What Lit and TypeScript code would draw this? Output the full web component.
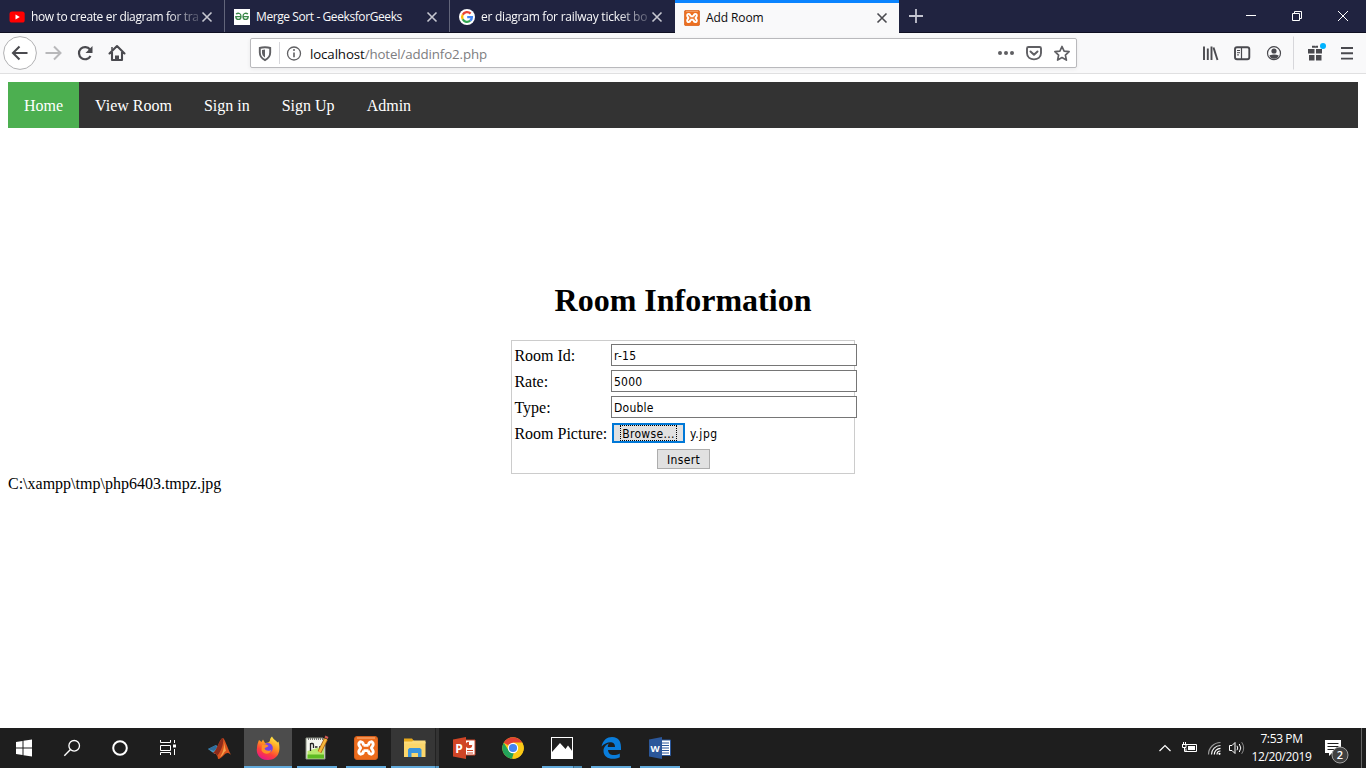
import { LitElement, html, css, svg } from "lit";
import { customElement } from "lit/decorators.js";
import { classMap } from "lit/directives/class-map.js";

// Icons are drawn in window coordinates: x, y, w, h is the cell each one fills.
const icon = (x: number, y: number, w: number, h: number, body: unknown) =>
  html`<svg width=${w} height=${h} viewBox="${x} ${y} ${w} ${h}" aria-hidden="true">${body}</svg>`;

const xamppMark = (fill: string) => svg`
  <rect x="0.5" y="0.5" width="23" height="23" rx="2.5" fill=${fill} stroke="#d35f1c"/>
  <path d="M3 2h18" stroke="#f9b98a" stroke-width="1"/>
  <path d="M9.5 9.4h5M9.5 14.600h5M9.500 9.400C9.500 4.600 4.600 5 4.800 8.400C4.900 10.200 6 10.600 6.600 12C6 13.400 4.900 13.800 4.800 15.600C4.600 19 9.500 19.400 9.500 14.600M14.500 9.400C14.500 4.600 19.400 5 19.200 8.400C19.100 10.200 18 10.600 17.400 12C18 13.400 19.100 13.800 19.200 15.600C19.400 19 14.500 19.400 14.500 14.600" fill="none" stroke="#fff" stroke-width="2.900" stroke-linejoin="round"/>`;

const favicons = {
  youtube: html`<svg width="16" height="16" viewBox="0 0 16 16"><rect x="0.5" y="2.5" width="15.2" height="11" rx="2.6" fill="#f00"/><path d="M6.5 5.4v5.2L10.8 8z" fill="#fff"/></svg>`,
  geeks: html`<svg width="16" height="16" viewBox="0 0 16 16"><rect width="16" height="16" fill="#fff"/><path d="M2 5C4.500 3.400 7 4.400 7 7.400C7 11.400 2 11.400 1.800 7.600H7M14 5C11.500 3.400 9 4.400 9 7.400C9 11.400 14 11.400 14.200 7.600H9" fill="none" stroke="#3a8748" stroke-width="1.300"/></svg>`,
  google: html`<svg width="16" height="16" viewBox="0 0 16 16"><circle cx="8" cy="8" r="8" fill="#fff"/><g fill="none" stroke-width="2.3"><path d="M11.6 4.6A4.9 4.9 0 0 0 3.7 5.7" stroke="#ea4335"/><path d="M3.7 5.7A4.9 4.9 0 0 0 3.7 10.3" stroke="#fbbc05"/><path d="M3.7 10.3A4.9 4.9 0 0 0 11.2 11.7" stroke="#34a853"/><path d="M11.2 11.7A4.9 4.9 0 0 0 12.9 8.1H8.2" stroke="#4285f4"/></g></svg>`,
  xampp: html`<svg width="16" height="16" viewBox="0 0 24 24">${xamppMark("#ec6f20")}</svg>`,
};

const tabs = [
  { title: "how to create er diagram for tra", fav: favicons.youtube, active: false, track: "a" },
  { title: "Merge Sort - GeeksforGeeks", fav: favicons.geeks, active: false, track: "b" },
  { title: "er diagram for railway ticket bo", fav: favicons.google, active: false, track: "c" },
  { title: "Add Room", fav: favicons.xampp, active: true, track: "d" },
];

@customElement("tab-strip")
export class TabStrip extends LitElement {
  static styles = css`
    :host { display: flex; height: 33px; box-sizing: border-box; background: #202340; border-bottom: 1px solid #0f1022;
      font: 12px/16px "Open Sans", "Noto Sans", sans-serif; color: #f9f9fa; }
    svg { display: block; flex: none; }
    .tab { width: 225px; height: 32px; box-sizing: border-box; padding: 2px 11px 0 9px; display: flex; align-items: center;
      border-right: 1px solid #62657a; }
    .tab.before { border-right-color: #202340; }
    .tab.active { width: 224px; height: 33px; background: #f9f9fa; color: #0c0c0d; border-top: 3px solid #0a84ff; border-right: 0; padding: 0 11px 1px 9px; }
    .title { flex: 1; margin-left: 6px; white-space: nowrap; }
    .fade { -webkit-mask-image: linear-gradient(to right, #000 calc(100% - 34px), rgba(0,0,0,.15)); mask-image: linear-gradient(to right, #000 calc(100% - 34px), rgba(0,0,0,.15)); }
    .a { letter-spacing: -0.36px; }
    .b { letter-spacing: -0.41px; }
    .c { letter-spacing: -0.25px; }
    .d { letter-spacing: -0.1px; }
    .grow { flex: 1; }
  `;
  render() {
    return html`
      ${tabs.map((t, i) => html`
        <div class=${classMap({ tab: true, active: t.active, before: i === 2 })}>
          ${t.fav}
          <span class=${classMap({ title: true, fade: i === 0 || i === 2, [t.track]: true })}>${t.title}</span>
          <svg width="12" height="12" viewBox="0 0 12 12"><path d="M1.5 1.5l9 9M10.5 1.5l-9 9" stroke=${t.active ? "#4a4a4f" : "#c6c7d0"} stroke-width="1.6"/></svg>
        </div>`)}
      ${icon(899, 0, 34, 32, svg`<path d="M909 16h14M916 9v14" stroke="#c3c4d0" stroke-width="1.8"/>`)}
      <span class="grow"></span>
      ${icon(1228, 0, 46, 32, svg`<path d="M1246 15.5h10" stroke="#fff"/>`)}
      ${icon(1274, 0, 46, 32, svg`<path d="M1292.5 13.5h7v7h-7zM1294.500 13v-1.500h7v7h-1.500" fill="none" stroke="#fff"/>`)}
      ${icon(1320, 0, 46, 32, svg`<path d="M1338 11l10 10M1348 11l-10 10" stroke="#fff"/>`)}
    `;
  }
}

@customElement("nav-toolbar")
export class NavToolbar extends LitElement {
  static styles = css`
    :host { display: flex; align-items: center; height: 41px; box-sizing: border-box; border-bottom: 1px solid #e0e0e1; background: #f9f9fa; }
    svg { display: block; flex: none; }
    .gap { width: 117px; }
    .grow { flex: 1; }
    .url { width: 827px; height: 30px; box-sizing: border-box; display: flex; align-items: center; background: #fff;
      border: 1px solid #b9b9bc; border-radius: 2px; box-shadow: 0 1px 4px rgba(0,0,0,.07); }
    .address { flex: 1; padding: 2px 0 0 1px; font: 13.3px/18px "Open Sans", "Noto Sans", sans-serif; color: #7d7d80; letter-spacing: -0.12px; white-space: nowrap; }
    .host { color: #0c0c0d; }
  `;
  render() {
    return html`
      ${icon(0, 33, 40, 40, svg`<circle cx="20" cy="53" r="16.400" fill="#fff" stroke="#b1b1b3"/><path d="M27.500 53H13M19.500 46.500L13 53l6.500 6.500" fill="none" stroke="#4a4a4f" stroke-width="2.100"/>`)}
      ${icon(40, 33, 30, 40, svg`<path d="M45.500 53H60M54 46.500l6.500 6.500L54 59.500" fill="none" stroke="#b8b8ba" stroke-width="2"/>`)}
      ${icon(70, 33, 31, 40, svg`<path d="M90 49.500A6.100 6.100 0 1 0 90.500 56" fill="none" stroke="#4a4a4f" stroke-width="2.200"/><path d="M92.500 46v7h-7z" fill="#4a4a4f"/>`)}
      ${icon(101, 33, 32, 40, svg`<path d="M109.500 53.500L117 46l7.500 7.500M112 52v8h10v-8" fill="none" stroke="#4a4a4f" stroke-width="2.100" stroke-linejoin="round" stroke-linecap="round"/><path d="M115 55.500h4V60h-4z" fill="#4a4a4f"/><path d="M112 47v3" stroke="#4a4a4f" stroke-width="1.500"/>`)}
      <span class="gap"></span>
      <div class="url">
        ${icon(251, 39, 58, 28, svg`
          <path d="M265 47.200c-2 0-4 .3-5.200.8v4.500c0 3.500 2 6 5.200 7.600c3.200-1.600 5.200-4.100 5.200-7.600V48c-1.200-.5-3.200-.8-5.200-.8z" fill="none" stroke="#606063" stroke-width="1.900"/>
          <path d="M265 49.500v8c-2-1-3-3-3-5V50z" fill="#606063"/>
          <path d="M279.500 42v22" stroke="#d7d7db"/>
          <circle cx="294" cy="53.500" r="6.500" fill="none" stroke="#606063" stroke-width="1.300"/><path d="M294 52.500v4.800" stroke="#606063" stroke-width="1.600"/><circle cx="294" cy="50" r="1" fill="#606063"/>`)}
        <div class="address"><span class="host">localhost</span>/hotel/addinfo2.php</div>
        ${icon(992, 39, 84, 28, svg`
          <g fill="#5f5f63"><circle cx="1000" cy="53" r="2"/><circle cx="1006" cy="53" r="2"/><circle cx="1012" cy="53" r="2"/></g>
          <path d="M1027 48.500q0-1.500 1.500-1.500h11q1.500 0 1.500 1.500V53c0 8.500-14 8.500-14 0z" fill="none" stroke="#5f5f63" stroke-width="1.900"/><path d="M1030.500 51.500l3.500 3.200l3.500-3.200" fill="none" stroke="#5f5f63" stroke-width="2" stroke-linecap="round" stroke-linejoin="round"/>
          <path d="M1062 46.500l2.100 4.700l5 .5l-3.700 3.400l1 5l-4.400-2.500l-4.400 2.500l1-5l-3.700-3.400l5-.5z" fill="none" stroke="#5f5f63" stroke-width="1.700" stroke-linejoin="round"/>`)}
      </div>
      <span class="grow"></span>
      ${icon(1194, 33, 32, 40, svg`<g stroke="#4a4a4f" stroke-width="1.900"><path d="M1204 46.500V60M1207.800 48.500V60M1211.500 46.500V60"/><path d="M1213.500 47.500l4 12.500"/></g>`)}
      ${icon(1226, 33, 32, 40, svg`<rect x="1235" y="47.200" width="14.300" height="12" rx="2" fill="none" stroke="#4a4a4f" stroke-width="1.900"/><path d="M1241.500 47v12.500" stroke="#4a4a4f" stroke-width="1.200"/><path d="M1237 50.500h3M1237 52.700h3M1237 54.900h2" stroke="#4a4a4f"/>`)}
      ${icon(1258, 33, 32, 40, svg`<circle cx="1274" cy="53.200" r="6.500" fill="none" stroke="#4a4a4f" stroke-width="1.200"/><circle cx="1274" cy="51" r="2.600" fill="#4a4a4f"/><path d="M1269.300 55.500q4.700-2 9.400 0a5 5 0 0 1-9.400 0z" fill="#4a4a4f"/>`)}
      ${icon(1290, 33, 42, 40, svg`<path d="M1293.500 36.500v33" stroke="#d7d7db"/><path d="M1308 49h6.500v4.500h-6.500zM1316 49h6v4.500h-6zM1309 55h5.500v5.500h-5.500zM1316 55h5.500v5.500h-5.500z" fill="#4a4a4f"/><path d="M1312 45.700h3l.3 1l.3-1h2.400v2h-6z" fill="#4a4a4f"/><circle cx="1323" cy="46" r="3" fill="#00b3ff"/>`)}
      ${icon(1332, 33, 34, 40, svg`<path d="M1341 48h12M1341 53.300h12M1341 58.600h12" stroke="#4a4a4f" stroke-width="1.900"/>`)}
    `;
  }
}

@customElement("room-page")
export class RoomPage extends LitElement {
  static styles = css`
    :host { display: block; flex: 1; min-height: 0; overflow: hidden; box-sizing: border-box; padding: 8px; background: #fff;
      color: #000; font: 16px/18px "Liberation Serif", serif; }
    .menu { display: flex; height: 46px; background: #333; }
    .link { padding: 15px 16px 13px; color: #fff; text-decoration: none; }
    .current { background: #4caf50; }
    h1 { margin: 154px 0 0; font-size: 32px; line-height: 37px; text-align: center; }
    .form { width: 344px; height: 134px; box-sizing: border-box; margin: 21px auto 0; border: 1px solid #ccc; padding: 3px 2px;
      display: grid; grid-template-columns: 97px 246px; grid-auto-rows: 22px; row-gap: 4px; }
    .label { padding: 3px 0 0 0.4px; white-space: nowrap; }
    .input, .file, .send { font: 12px/18px "DejaVu Sans Condensed", "DejaVu Sans", sans-serif; font-stretch: condensed; letter-spacing: 0.35px; }
    .input { width: 246px; height: 22px; box-sizing: border-box; border: 1px solid #767676; padding: 2px 2px 0; margin: 0; background: #fff; color: #000; border-radius: 0; letter-spacing: 0.25px; }
    .file { display: flex; align-items: center; padding-left: 1px; gap: 5px; height: 20px; padding-top: 1px; }
    .name { padding-top: 2px; letter-spacing: 0.6px; }
    .browse { width: 73px; height: 20px; box-sizing: border-box; border: 2px solid #0078d7; background: #e1e1e1; display: flex; justify-content: center; align-items: center; }
    .focus { border: 1px dotted #000; line-height: 16px; width: 55px; height: 14px; text-align: center; white-space: nowrap; }
    .send { grid-column: 1 / 3; width: 53px; height: 20px; box-sizing: border-box; margin: 1px 0 0 143px; border: 1px solid #adadad; background: #e1e1e1; text-align: center; padding: 1px 0 0; border-radius: 0; color: #000; }
    .path { margin-top: 1px; }
  `;
  render() {
    const links = ["Home", "View Room", "Sign in", "Sign Up", "Admin"];
    const rows = [["Room Id:", "r-15"], ["Rate:", "5000"], ["Type:", "Double"]];
    return html`
      <nav class="menu">${links.map((l, i) => html`<a class=${classMap({ link: true, current: i === 0 })}>${l}</a>`)}</nav>
      <h1>Room Information</h1>
      <div class="form">
        ${rows.map(([label, value]) => html`<span class="label">${label}</span><input class="input" .value=${value} aria-label=${label}>`)}
        <span class="label">Room Picture:</span>
        <div class="file"><span class="browse"><span class="focus">Browse...</span></span><span class="name">y.jpg</span></div>
        <button class="send">Insert</button>
      </div>
      <div class="path">C:\\xampp\\tmp\\php6403.tmpz.jpg</div>
    `;
  }
}

const apps = [
  { state: "", art: svg`
      <path d="M208 749l8-4 3 3-4 6-3-2z" fill="#4a9ac4"/><path d="M208 749l8-4 1 3-3 3z" fill="#2f6d9c"/>
      <path d="M213 753c4-2 6-14 10-15c2 1 4 9 8 17c-3-3-5-2-7 0c-2 2-4 4-6 4c0-3-2-6-5-6z" fill="#d9531e"/>
      <path d="M223 738c1 4-1 12-6 18c0-2-2-3-4-3c4-2 6-14 10-15z" fill="#8c2b1b"/><path d="M223 740c2 4 1 11-3 17c4-2 4-6 6-6c-1-4-2-9-3-11z" fill="#f5a14b"/>` },
  { state: "focused", art: svg`
      <defs><linearGradient id="fx" x1="0.8" y1="0" x2="0.3" y2="1"><stop offset="0" stop-color="#fff04a"/><stop offset=".4" stop-color="#ff9a20"/><stop offset=".7" stop-color="#ff4039"/><stop offset="1" stop-color="#e7158b"/></linearGradient></defs>
      <path d="M259 740l2.500 2l1.500-2.500l2 3.500c3 0 5-1 5-3c0-1 .5-2 2-3.500c1 3 4 3.500 5.500 6l1-1c2.500 9 .5 18-10.500 18.500c-10 0-12-8-11-12c0-3 1-6 2-8z" fill="url(#fx)"/>
      <circle cx="267.800" cy="748" r="5" fill="#7542e5"/><path d="M262 745c3-2 6 0 6.500 1c-1 1.500-3 1-4 2.500c1 2.500 5 3 7 1c-1 5-7 6-10 1z" fill="#ff9026"/>` },
  { state: "open", art: svg`
      <path d="M306 738h17l2 3v18h-19z" fill="#f4f6ef" stroke="#8a9184"/><path d="M307.500 751L324 746v12.500h-16.500z" fill="#b9e86e"/><path d="M307.500 754.500h16.500v4h-16.500z" fill="#5ebb22"/>
      <path d="M308 739h15" stroke="#777" stroke-width="2" stroke-dasharray="1 1"/><path d="M310.500 743v8M311 743.500h1.500q1 0 1 1.500v3M315 747h2.500M319 747h2.500" stroke="#222" fill="none" stroke-width="1.300"/>
      <path d="M326 739l-6.500 13" stroke="#a75a12" stroke-width="4"/><path d="M326 739l-6.500 13" stroke="#f5b83c" stroke-width="2.600"/><path d="M325 736.500l3 1.500" stroke="#d25a55" stroke-width="2"/>` },
  { state: "open", art: svg`<g transform="translate(354 736)">${xamppMark("#ec6b1b")}</g>` },
  { state: "stacked", art: svg`
      <path d="M404 740v-1.500h8l2 2.500h11v15h-21z" fill="#e8a91c"/><path d="M404 742h21.500v15H404z" fill="#fbd66b"/><path d="M404 741.500h8l1.500-1h12v3H404z" fill="#fbdc7e"/>
      <path d="M408 757v-7.500l1.500-1.500h10.500l1.500 1.500v7.500h-3.500v-4h-6.500v4z" fill="#3a94dc"/>` },
  { state: "", art: svg`
      <path d="M465 740h10v15h-10z" fill="#fff" stroke="#d04526"/><circle cx="469" cy="745" r="3.200" fill="#d04526"/><path d="M469 745v-3.500h3.500V745z" fill="#fff"/><path d="M467 750.500h6M467 753h6" stroke="#d04526"/>
      <path d="M453 739.500l13-2.500v22l-13-2.500z" fill="#d04526"/><text x="455.300" y="752.500" font-family="Open Sans" font-weight="700" font-size="12" fill="#fff">P</text>` },
  { state: "", art: svg`
      <circle cx="513" cy="748" r="10.700" fill="#fbc916"/><path d="M513 748L503.700 742.700A10.700 10.700 0 0 1 522.400 743z" fill="#e34133"/><path d="M503.700 742.700L509 751l5 1-2 6.700A10.700 10.700 0 0 1 503.700 742.700z" fill="#22a35a"/><path d="M513 742.500h9.200A10.700 10.700 0 0 1 512.500 758.700l5.500-8z" fill="#fbc916"/>
      <circle cx="513" cy="748" r="5.200" fill="#fff"/><circle cx="513" cy="748" r="4.100" fill="#4384f3"/>` },
  { state: "multi", art: svg`<rect x="551.500" y="737.500" width="21" height="21" fill="#202020" stroke="#fff"/><path d="M552 752l8-9 5.500 6 2.500-3.500 4.500 6v7h-20.500z" fill="#fff"/>` },
  { state: "open", art: svg`<path d="M601.500 746.500C603 740 607 737 612 737C619 737 621.500 742 621 750H608C608.500 756 615 756 619.800 753.500V757.200C612 761 603.500 758 603.500 751C603.500 747 606 744.500 609 743.500C608 744.500 607.800 746 607.800 747H615C615 740 606 741.500 601.500 746.500z" fill="#0a7ddb"/>` },
  { state: "open", art: svg`
      <path d="M660 740h10.500v15.500H660z" fill="#fff" stroke="#2b579a"/><path d="M662 743h7M662 745.500h7M662 748h7M662 750.500h7M662 753h7" stroke="#2b579a"/>
      <path d="M649 739.500l13-2.500v22l-13-2.500z" fill="#2b579a"/><text x="650.600" y="751.500" font-family="Open Sans" font-weight="700" font-size="9.500" fill="#fff">W</text>` },
];

@customElement("task-bar")
export class TaskBar extends LitElement {
  static styles = css`
    :host { display: flex; height: 40px; background: #1e1e1e; color: #fff; font: 12px/18px "Open Sans", "Noto Sans", sans-serif; }
    svg { display: block; flex: none; }
    .app { width: 49px; height: 40px; display: grid; justify-items: center; align-items: end; }
    .app > * { grid-area: 1 / 1; }
    .line { height: 2px; width: 40px; background: #62aadb; margin-right: 1px; }
    .focused { background: linear-gradient(to right, #4c4c4c 48px, transparent 48px); }
    .focused .line { width: 48px; }
    .stacked { background: linear-gradient(to right, #363636 44px, #222 44px, #222 45px, #333 45px, #333 48px, transparent 48px); }
    .stacked .line { width: 48px; background: linear-gradient(to right, #62aadb 44px, #3d7195 44px, #3d7195 45px, #5799c4 45px); }
    .multi .line { background: linear-gradient(to right, #62aadb 31px, #38698a 31px, #38698a 32px, #4f8db4 32px); }
    .tools { width: 3px; }
    .grow { flex: 1; }
    .clock { width: 62px; height: 40px; padding: 2px 0 0 1px; box-sizing: border-box; text-align: center; letter-spacing: -0.38px; white-space: nowrap; }
  `;
  render() {
    return html`
      ${icon(0, 728, 48, 40, svg`<path d="M16 742l6.500-1v6.500H16zM23.500 740.800l8.500-1.200v7.900h-8.500zM16 748.500h6.500v6.500l-6.500-1zM23.500 748.500H32v7.900l-8.500-1.200z" fill="#fff"/>`)}
      ${icon(48, 728, 48, 40, svg`<circle cx="74.200" cy="745.800" r="5.300" fill="none" stroke="#fff" stroke-width="1.300"/><path d="M70.500 749.500L64.300 755.700" stroke="#fff" stroke-width="1.400"/>`)}
      ${icon(96, 728, 48, 40, svg`<circle cx="120" cy="748" r="6.800" fill="none" stroke="#fff" stroke-width="2"/>`)}
      ${icon(144, 728, 48, 40, svg`<path d="M160.500 740v2.500h10V740M160.500 755v-2.500h10v2.500M160.500 745.500h10v5h-10zM174.500 740v3M174.500 749v6" fill="none" stroke="#fff"/><path d="M173 744.500h3v3h-3z" fill="#fff"/>`)}
      <span class="tools"></span>
      ${apps.map((a, i) => html`<div class="app ${a.state}">
        ${icon(195 + i * 49, 728, 49, 40, a.art)}
        ${a.state ? html`<span class="line"></span>` : ""}
      </div>`)}
      <span class="grow"></span>
      ${icon(1152, 728, 98, 40, svg`
        <path d="M1159.500 751l5.500-5.500l5.500 5.500" fill="none" stroke="#fff" stroke-width="1.200"/>
        <path d="M1186 744.500h10.500v7H1186v-3M1182 744.500h4.500M1183.500 742v2M1185.500 742v2M1182.500 745v2.500h3.500V745M1184.500 747v4.500h2" fill="none" stroke="#fff"/><path d="M1188 746h7v4h-7z" fill="#fff"/>
        <g fill="none" stroke-width="1.200"><path d="M1208.500 754.500A12 12 0 0 1 1220.500 742.500" stroke="#999"/><path d="M1211.500 754.500A9 9 0 0 1 1220.500 745.500" stroke="#eee"/><path d="M1214.300 754.500A6.200 6.200 0 0 1 1220.500 748.300" stroke="#fff"/><path d="M1217 754.500A3.500 3.500 0 0 1 1220.500 751" stroke="#fff"/></g><circle cx="1219.500" cy="753.800" r="1.100" fill="#fff"/>
        <path d="M1229.500 745.500h2.500l3-3v11l-3-3h-2.500z" fill="none" stroke="#fff"/><path d="M1237 745.800q1.500 2.200 0 4.400M1239.300 744q3 4 0 8" fill="none" stroke="#fff"/><path d="M1241.700 742.200q4 5.800 0 11.600" fill="none" stroke="#8a8a8a"/>`)}
      <div class="clock"><div>7:53 PM</div><div>12/20/2019</div></div>
      ${icon(1312, 728, 54, 40, svg`
        <path d="M1325 740h16v13h-9l-3 3v-3h-4z" fill="#fff"/><path d="M1327.500 743.500h11M1327.500 746.500h11M1327.500 749.500h7" stroke="#1e1e1e"/>
        <circle cx="1340" cy="755" r="8" fill="#404040" stroke="#a0a0a0"/><text x="1340" y="759" text-anchor="middle" font-family="Open Sans" font-size="11" font-weight="600" fill="#fff">2</text>
        <path d="M1361.500 728v40" stroke="#656565"/>`)}
    `;
  }
}

@customElement("app-root")
export class AppRoot extends LitElement {
  static styles = css`
    :host { display: flex; flex-direction: column; width: 1366px; height: 768px; overflow: hidden; }
  `;
  render() {
    return html`<tab-strip></tab-strip><nav-toolbar></nav-toolbar><room-page></room-page><task-bar></task-bar>`;
  }
}
